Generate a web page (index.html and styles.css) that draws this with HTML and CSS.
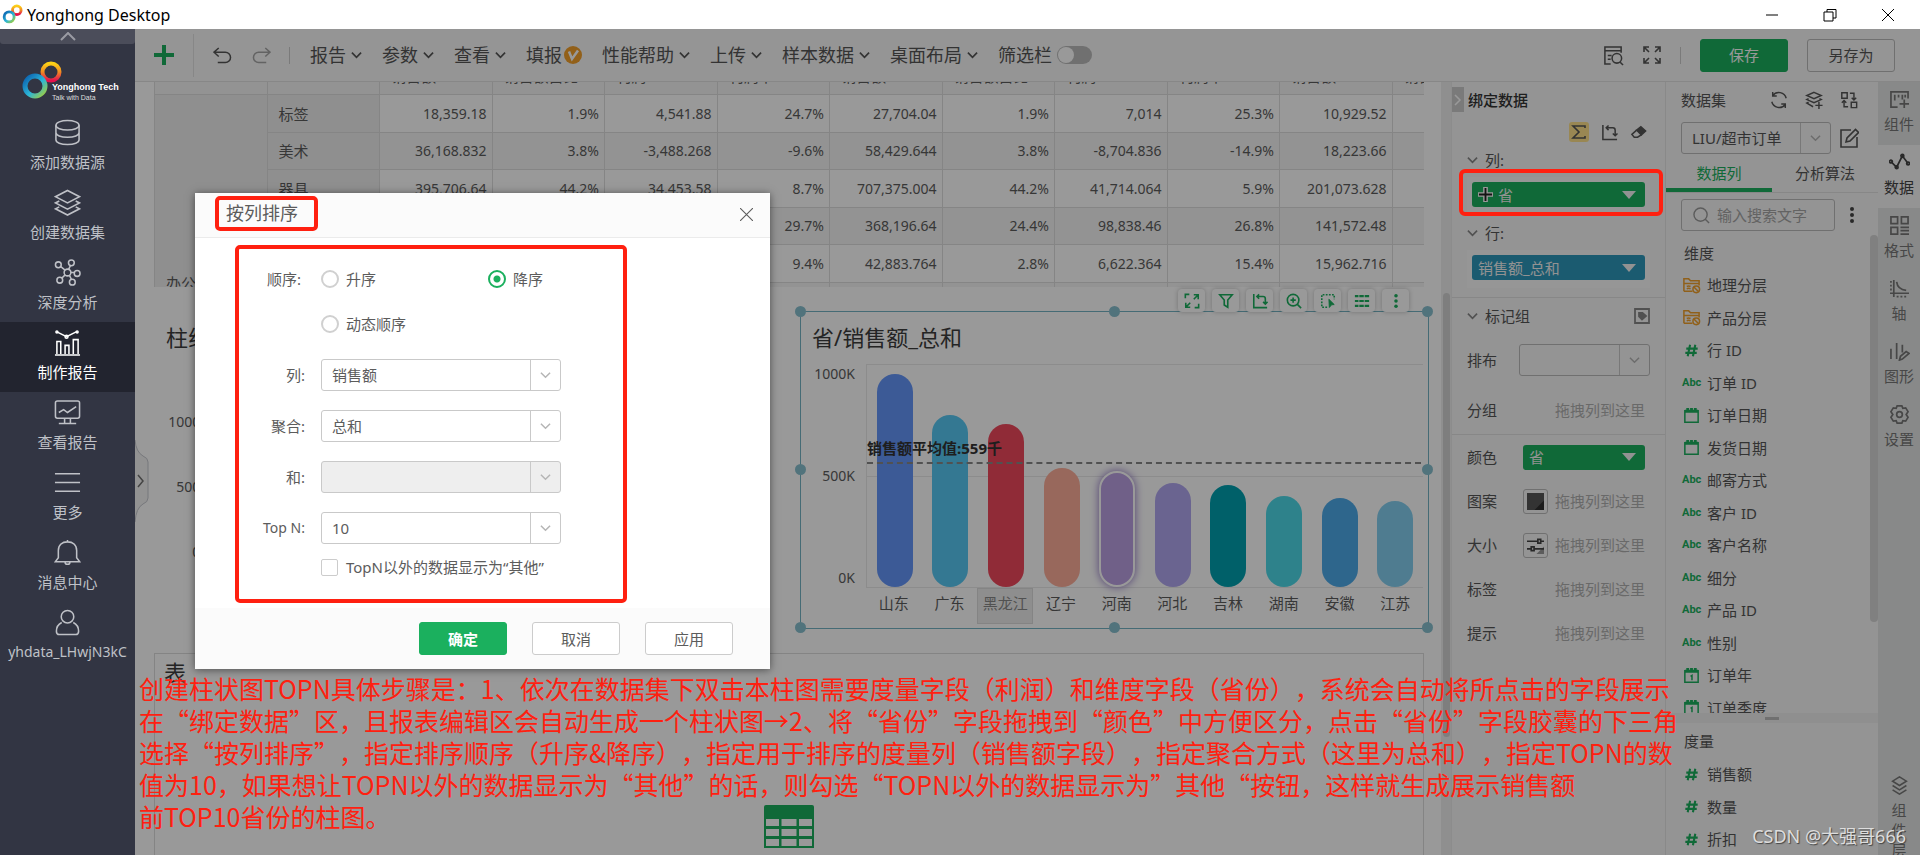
FILE: index.html
```html
<!DOCTYPE html>
<html lang="zh-CN">
<head>
<meta charset="utf-8">
<title>Yonghong Desktop</title>
<link rel="stylesheet" href="styles.css">
</head>
<body>
<svg class="defs" aria-hidden="true">
  <defs>
    <linearGradient id="warm" x1="0" y1="0" x2="0" y2="1"><stop offset="0" stop-color="#fcd116"/><stop offset=".5" stop-color="#f08a24"/><stop offset="1" stop-color="#e4104e"/></linearGradient>
    <linearGradient id="cool" x1="0" y1="0" x2="1" y2="1"><stop offset="0" stop-color="#0a5fae"/><stop offset=".55" stop-color="#2bb5d8"/><stop offset="1" stop-color="#a4cf3a"/></linearGradient>
  </defs>
  <symbol id="i-chev" viewBox="0 0 12 8"><path d="M1 1.500l5 5 5-5"/></symbol>
  <symbol id="i-down" viewBox="0 0 14 8"><path d="M0 0h14L7 8z"/></symbol>
  <symbol id="i-swap" viewBox="0 0 18 18"><path d="M2 1v15.500h15M5.500 4h7q2.500 0 2.500 2.500v6M8 1.500L5.500 4 8 6.500M12.500 10l2.500 2.500 2.500-2.500"/></symbol>
  <symbol id="i-hash" viewBox="0 0 20 20"><path d="M8.500 4L6 16M14 4l-2.500 12M4.500 8h12M3.500 12.500h12"/></symbol>
  <symbol id="i-cal" viewBox="0 0 20 20"><path d="M3 5h14v12H3z"/><path d="M3 5.500h14M6 2v4M10 2v4M14 2v4" stroke-width="3"/></symbol>
  <symbol id="i-folder" viewBox="0 0 20 20"><path d="M2 16V3h5l2 2h9v5M2 8h16M2 16h9M5 11q2-1 4 0M5 13.500q2-1 4 0"/><circle cx="15" cy="14" r="3.500"/><path d="M12.500 11.500l5 5"/></symbol>
  <symbol id="i-stack" viewBox="0 0 28 28"><path d="M14 1.500l12.500 6.500L14 14.500 1.500 8zM5.500 12.500l-4 2L14 21l12.500-6.500-4-2M5.500 18.500l-4 2L14 27l12.500-6.500-4-2"/></symbol>
  <symbol id="i-full" viewBox="0 0 18 18"><path d="M1 6V1h5M12 1h5v5M17 12v5h-5M6 17H1v-5M1.500 1.500l4.500 4.500M16.500 1.500L12 6M16.500 16.500L12 12M1.500 16.500L6 12"/></symbol>
  <symbol id="i-corners" viewBox="0 0 18 18"><path d="M1.500 6V1.500H6M1.500 9v0M11 2h5v5M16 2l-5 5M7 16H2v-5M2 16l5-5M16.500 12v4.500H12"/></symbol>
</svg>

<header class="titlebar">
  <svg class="app-logo" viewBox="0 0 22 22"><circle cx="15.500" cy="6.500" r="4.500" stroke="url(#warm)"/><circle cx="7.500" cy="13.500" r="5.200" stroke="url(#cool)"/></svg>
  <span class="app-name">Yonghong Desktop</span>
  <div class="window-buttons">
    <button aria-label="最小化"><svg viewBox="0 0 14 14"><path d="M1 7h12"/></svg></button>
    <button aria-label="还原"><svg viewBox="0 0 14 14"><path d="M1 4h9v9H1zM4 4V1.500h9V10h-3"/></svg></button>
    <button aria-label="关闭"><svg viewBox="0 0 14 14"><path d="M1 1l12 12M13 1L1 13"/></svg></button>
  </div>
</header>

<div class="app">
  <nav class="sidebar">
    <button class="side-fold" aria-label="收起"><svg viewBox="0 0 16 9"><path d="M1 8l7-7 7 7"/></svg></button>
    <div class="brand">
      <svg viewBox="0 0 42 40"><circle cx="29" cy="12" r="8.500" stroke="url(#warm)" stroke-width="4"/><circle cx="13" cy="26" r="10" stroke="url(#cool)" stroke-width="5"/></svg>
      <div class="brand-text"><strong>Yonghong Tech</strong><span>Talk with Data</span></div>
    </div>
    <a class="side-item" href="#"><svg viewBox="0 0 28 28"><ellipse cx="14" cy="6.500" rx="12" ry="5"/><path d="M2 6.500v15c0 3 5 5 12 5s12-2 12-5v-15M2 14c0 3 5 5 12 5s12-2 12-5"/></svg>添加数据源</a>
    <a class="side-item" href="#"><svg><use href="#i-stack"/></svg>创建数据集</a>
    <a class="side-item" href="#"><svg viewBox="0 0 28 28"><circle cx="14" cy="14" r="3.500"/><circle cx="4.500" cy="6" r="3"/><circle cx="18" cy="4" r="3"/><circle cx="24" cy="15" r="3"/><circle cx="19" cy="24" r="3"/><circle cx="6" cy="22" r="3"/><path d="M7 8l4.500 3.500M17 7l-2 4M17.500 14H21M16 17l2 4M11.500 16.500L8 20"/></svg>深度分析</a>
    <a class="side-item active" href="#"><svg viewBox="0 0 28 28"><path d="M1 27h26M3 26V13h4v13M11.500 26V17h4v9M20 26V11h5v15M3 3l10 5 10-5"/><circle cx="3" cy="3" r="1"/><circle cx="13" cy="8" r="1.500"/><circle cx="24" cy="3" r="1"/></svg>制作报告</a>
    <a class="side-item" href="#"><svg viewBox="0 0 28 28"><rect x="1.500" y="2" width="25" height="18" rx="2"/><path d="M5 14l5-3 4 3 9-6M11 20v5M17 20v5M5 25.500h18"/></svg>查看报告</a>
    <a class="side-item" href="#"><svg viewBox="0 0 28 28"><path d="M1 5h26M1 14h26M1 23h26"/></svg>更多</a>
    <a class="side-item" href="#"><svg viewBox="0 0 28 28"><path d="M1.500 23.500h25l-3-4V12c0-6-4-9-9.500-9s-9.500 3-9.500 9v7.500zM11.500 24c0 3 5 3 5 0M14 3V1"/></svg>消息中心</a>
    <a class="side-item user" href="#"><svg viewBox="0 0 28 28"><circle cx="14" cy="8" r="6.500"/><path d="M8 14c-4 2-5.500 5-5.500 9 0 2 1 3.500 3 3.500h17c2 0 3-1.500 3-3.500 0-4-1.500-7-5.500-9"/></svg>yhdata_LHwjN3kC</a>
  </nav>

  <div class="workspace">
    <div class="toolbar">
      <button class="add" aria-label="新建"><svg viewBox="0 0 20 20"><path d="M10 0v20M0 10h20"/></svg></button>
      <div class="history">
        <button aria-label="撤销"><svg viewBox="0 0 20 18"><path d="M6 1L1 5.500 6 10M1 5.500h12a5 5 0 010 11H5"/></svg></button>
        <button class="off" aria-label="重做"><svg viewBox="0 0 20 18"><path d="M14 1l5 4.500L14 10M19 5.500H7a5 5 0 000 11h8"/></svg></button>
      </div>
      <div class="menus">
        <button>报告<svg><use href="#i-chev"/></svg></button>
        <button>参数<svg><use href="#i-chev"/></svg></button>
        <button>查看<svg><use href="#i-chev"/></svg></button>
        <button class="vip">填报<svg viewBox="0 0 18 18"><circle cx="9" cy="9" r="9"/><path d="M5 5.500l3 7.500 6-8.500"/></svg></button>
        <button>性能帮助<svg><use href="#i-chev"/></svg></button>
        <button>上传<svg><use href="#i-chev"/></svg></button>
        <button>样本数据<svg><use href="#i-chev"/></svg></button>
        <button>桌面布局<svg><use href="#i-chev"/></svg></button>
        <label class="switch">筛选栏<input type="checkbox"></label>
      </div>
      <div class="tools">
        <button class="icon-btn" aria-label="预览"><svg viewBox="0 0 22 22"><path d="M8 20H2V2h17v6M2 6h17M5 11h4M5 15h3"/><circle cx="14.500" cy="14" r="5"/><path d="M18 18l3 3"/></svg></button>
        <button class="icon-btn" aria-label="全屏"><svg><use href="#i-full"/></svg></button>
        <span class="rule"></span>
        <button class="btn primary">保存</button>
        <button class="btn">另存为</button>
      </div>
    </div>

    <div class="stage">
      <main class="canvas">
        <div class="table-view">
          <table class="data">
            <thead><tr><th></th><th></th><th>销售额</th><th>销售额占比</th><th>利润</th><th>利润率</th><th>销售额</th><th>销售额占比</th><th>利润</th><th>利润率</th><th>销售额</th><th>销售额占比</th></tr></thead>
            <tbody>
            <tr><th class="group" rowspan="6">办公用品</th><th>标签</th><td>18,359.18</td><td>1.9%</td><td>4,541.88</td><td>24.7%</td><td>27,704.04</td><td>1.9%</td><td>7,014</td><td>25.3%</td><td>10,929.52</td><td></td></tr>
            <tr><th>美术</th><td>36,168.832</td><td>3.8%</td><td>-3,488.268</td><td>-9.6%</td><td>58,429.644</td><td>3.8%</td><td>-8,704.836</td><td>-14.9%</td><td>18,223.66</td><td></td></tr>
            <tr><th>器具</th><td>395,706.64</td><td>44.2%</td><td>34,453.58</td><td>8.7%</td><td>707,375.004</td><td>44.2%</td><td>41,714.064</td><td>5.9%</td><td>201,073.628</td><td></td></tr>
            <tr><th></th><td></td><td></td><td></td><td>29.7%</td><td>368,196.64</td><td>24.4%</td><td>98,838.46</td><td>26.8%</td><td>141,572.48</td><td></td></tr>
            <tr><th></th><td></td><td></td><td></td><td>9.4%</td><td>42,883.764</td><td>2.8%</td><td>6,622.364</td><td>15.4%</td><td>15,962.716</td><td></td></tr>
            <tr><th></th><td></td><td></td><td></td><td></td><td></td><td></td><td></td><td></td><td></td><td></td></tr>
            </tbody>
          </table>
        </div>

        <div class="charts">
          <section class="chart">
            <h2>柱线图</h2>
            <div class="plot-row"><div class="y-axis low"><span>1000K</span><span>500K</span><span>0K</span></div></div>
          </section>
          <section class="chart selected">
            <h2>省/销售额_总和</h2>
            <div class="plot-row">
              <div class="y-axis"><span>1000K</span><span>500K</span><span>0K</span></div>
              <div class="plot">
                <div class="bars">
                  <i class="b1" style="height:213px"></i><i class="b2" style="height:172px"></i><i class="b3" style="height:163px"></i><i class="b4" style="height:119px"></i><i class="b5" style="height:116px"></i><i class="b6" style="height:104px"></i><i class="b7" style="height:102px"></i><i class="b8" style="height:91px"></i><i class="b9" style="height:89px"></i><i class="b10" style="height:86px"></i>
                </div>
                <div class="average">销售额平均值:559千</div>
                <div class="x-axis"><span>山东</span><span>广东</span><span class="hot">黑龙江</span><span>辽宁</span><span>河南</span><span>河北</span><span>吉林</span><span>湖南</span><span>安徽</span><span>江苏</span></div>
              </div>
            </div>
            <div class="chart-tools">
              <button aria-label="放大"><svg><use href="#i-corners"/></svg></button>
              <button aria-label="过滤"><svg viewBox="0 0 18 18"><path d="M2 2h14l-5 6v8l-4-2.500V8z"/></svg></button>
              <button aria-label="转置"><svg><use href="#i-swap"/></svg></button>
              <button aria-label="缩放"><svg viewBox="0 0 18 18"><circle cx="8" cy="8" r="6.500"/><path d="M12.500 12.500L17 17M8 5v6M5 8h6"/></svg></button>
              <button aria-label="框选"><svg viewBox="0 0 18 18"><path d="M8 16H2V2h14v5" stroke-dasharray="2 1.500"/><path class="solid" d="M10 7l6 6-3 .3-2.500 3z" stroke-width="1"/></svg></button>
              <button aria-label="列表"><svg viewBox="0 0 18 18"><path d="M1 3.500h16M1 9h16M1 14.500h16" stroke-width="2.500" stroke-dasharray="4 1 5 1 5 1"/></svg></button>
              <button aria-label="更多"><svg class="dots" viewBox="0 0 18 18"><circle cx="9" cy="3" r="2"/><circle cx="9" cy="9" r="2"/><circle cx="9" cy="15" r="2"/></svg></button>
            </div>
            <i class="knob k1"></i><i class="knob k2"></i><i class="knob k3"></i><i class="knob k4"></i><i class="knob k5"></i><i class="knob k6"></i><i class="knob k7"></i><i class="knob k8"></i>
          </section>
        </div>

        <section class="grid-widget">
          <h2>表</h2>
          <svg viewBox="0 0 50 43"><path class="fill" d="M2 0h46q2 0 2 2v41H0V2q0-2 2-2z"/><path class="cells" d="M2 14h13v7H2zM17.500 14h15v7h-15zM35 14h13v7H35zM2 24h13v7H2zM17.500 24h15v7h-15zM35 24h13v7H35zM2 34h13v7H2zM17.500 34h15v7h-15zM35 34h13v7H35z"/></svg>
        </section>
      </main>
      <div class="gutter"><i></i></div>

      <aside class="bind">
        <button class="bind-fold" aria-label="收起"><svg viewBox="0 0 8 12"><path d="M1 1l5 5-5 5"/></svg></button>
        <h3>绑定数据</h3>
        <div class="bind-tools">
          <button class="sigma" aria-label="汇总"><svg viewBox="0 0 20 20"><path d="M16 6V4H4l6 6-6 6h12v-2"/></svg></button>
          <button aria-label="转置"><svg><use href="#i-swap"/></svg></button>
          <button aria-label="清除"><svg viewBox="0 0 18 18"><path class="ink" d="M7 6.500L11.500 3l5 4.500-4.500 4z"/><path d="M7 6.500L2 11l2.500 3H8l4-2.500"/></svg></button>
        </div>
        <div class="fold"><svg><use href="#i-chev"/></svg>列:</div>
        <div class="drop"><button class="pill"><svg class="cross" viewBox="0 0 16 16"><path class="halo" d="M8 0v16M0 8h16"/><path d="M8 1v14M1 8h14"/></svg><span>省</span><svg class="tri"><use href="#i-down"/></svg></button></div>
        <div class="fold"><svg><use href="#i-chev"/></svg>行:</div>
        <div class="drop"><button class="pill blue"><span>销售额_总和</span><svg class="tri"><use href="#i-down"/></svg></button></div>
        <div class="mark">
          <div class="fold"><svg><use href="#i-chev"/></svg>标记组<svg class="tag" viewBox="0 0 16 16"><path d="M1 1h14v14H1z"/><path class="ink" d="M5 5h3.500l3.500 3-4 3.500L5 8.500z"/></svg></div>
          <div class="brow tall"><label for="arrange">排布</label><span class="select"><select id="arrange"><option></option></select><svg><use href="#i-chev"/></svg></span></div>
          <div class="brow group-row"><span>分组</span><em>拖拽列到这里</em></div>
        </div>
        <div class="brow"><span>颜色</span><button class="pill"><span>省</span><svg class="tri"><use href="#i-down"/></svg></button></div>
        <div class="brow"><span>图案</span><button class="swatch" aria-label="图案"><svg viewBox="0 0 18 18"><path class="tone" d="M0 0h18v18H0z"/><path class="tone-dark" d="M18 8v10H8z"/></svg></button><em>拖拽列到这里</em></div>
        <div class="brow"><span>大小</span><button class="swatch" aria-label="大小"><svg viewBox="0 0 18 18"><path class="corner" d="M18 10v8h-8z"/><path class="slide" d="M0 4.500h11M15 4.500h3M0 12.500h4M8 12.500h10M11.500 2.500h3v4h-3zM4.500 10.500h3v4h-3z"/></svg></button><em>拖拽列到这里</em></div>
        <div class="brow"><span>标签</span><em>拖拽列到这里</em></div>
        <div class="brow"><span>提示</span><em>拖拽列到这里</em></div>
      </aside>

      <aside class="dataset">
        <div class="ds-head"><h3>数据集</h3>
          <button class="icon-btn" aria-label="刷新"><svg viewBox="0 0 20 20"><path d="M18 8A8.500 8.500 0 003 5M2 12a8.500 8.500 0 0015 3M3 1v4.500h4.500M17 19v-4.500h-4.500"/></svg></button>
          <button class="icon-btn" aria-label="添加数据集"><svg viewBox="0 0 20 20"><path d="M10 1.500l8 3.500-8 3.500L2 5zM4 8.500L2 9.500l8 3.500 8-3.500-2-1M4 12.500l-2 1 7 4M15.500 12v8M11.500 16h8"/></svg></button>
          <button class="icon-btn" aria-label="切换"><svg viewBox="0 0 20 20"><path d="M2 2h6v6H2zM12.500 12.500h6v6h-6zM11 2.500h4.500v7M13 7.500l2.500 2.500L18 7.500M9 17.500H4.500v-6M2 13l2.500-2.500L7 13"/></svg></button>
        </div>
        <div class="ds-pick"><span class="select"><select aria-label="数据集"><option>LIU/超市订单</option></select><svg><use href="#i-chev"/></svg></span>
          <button class="icon-btn" aria-label="编辑"><svg viewBox="0 0 20 20"><path d="M12 2H2v17h16V9M7 14l1-4 8.500-8.500 3 3L11 13z"/></svg></button></div>
        <div class="tabs"><button class="on">数据列</button><button>分析算法</button></div>
        <div class="search"><label><svg viewBox="0 0 18 18"><circle cx="8" cy="8" r="7"/><path d="M13 13l4 4"/></svg><input type="text" placeholder="输入搜索文字" aria-label="输入搜索文字"></label>
          <button aria-label="更多"><svg viewBox="0 0 4 18"><circle cx="2" cy="3" r="2"/><circle cx="2" cy="9" r="2"/><circle cx="2" cy="15" r="2"/></svg></button></div>
        <div class="dims">
          <h4>维度</h4>
          <ul>
            <li><svg class="or"><use href="#i-folder"/></svg>地理分层</li>
            <li><svg class="or"><use href="#i-folder"/></svg>产品分层</li>
            <li><svg class="bold"><use href="#i-hash"/></svg>行 ID</li>
            <li><b>Abc</b>订单 ID</li>
            <li><svg><use href="#i-cal"/></svg>订单日期</li>
            <li><svg><use href="#i-cal"/></svg>发货日期</li>
            <li><b>Abc</b>邮寄方式</li>
            <li><b>Abc</b>客户 ID</li>
            <li><b>Abc</b>客户名称</li>
            <li><b>Abc</b>细分</li>
            <li><b>Abc</b>产品 ID</li>
            <li><b>Abc</b>性别</li>
            <li><svg viewBox="0 0 20 20"><use href="#i-cal"/><path d="M9 11l1.500-1v5"/></svg>订单年</li>
            <li><svg viewBox="0 0 20 20"><use href="#i-cal"/><path d="M9 11l1.500-1v5"/></svg>订单季度</li>
          </ul>
          <i class="thumb"></i>
        </div>
        <div class="splitter"><i></i></div>
        <div class="measures">
          <h4>度量</h4>
          <ul>
            <li><svg class="bold"><use href="#i-hash"/></svg>销售额</li>
            <li><svg class="bold"><use href="#i-hash"/></svg>数量</li>
            <li><svg class="bold"><use href="#i-hash"/></svg>折扣</li>
          </ul>
        </div>
      </aside>

      <nav class="rail">
        <a href="#"><svg viewBox="0 0 22 20"><path d="M9 18H2V2h18v7M6 5v6M10 5v3M14 5v5M17 5v3M16 10v9M11 14.500h10"/></svg>组件</a>
        <a href="#" class="on"><svg viewBox="0 0 22 20"><path d="M2 9l6 6 6-12 6 8"/><circle cx="2" cy="9" r="1.500"/><circle cx="8" cy="15" r="1.500"/><circle cx="14" cy="3" r="1.500"/><circle cx="20" cy="11" r="1.500"/></svg>数据</a>
        <a href="#"><svg viewBox="0 0 22 20"><path d="M2 1h7v7H2zM13 1h7v7h-7zM2 12h7v7H2zM12 12h9M12 15.500h9M12 19h9"/></svg>格式</a>
        <a href="#"><svg viewBox="0 0 22 20"><path d="M5 1v18M1 15h20M8 3q1 8 10 9"/><path d="M2 2v12M8 18.500h12" stroke-dasharray="2 2"/></svg>轴</a>
        <a href="#"><svg viewBox="0 0 22 20"><path d="M2 7v11M8 1v17M14 3v8M11 19l1-4 6-5 3 2-7 6z"/></svg>图形</a>
        <a href="#"><svg viewBox="0 0 22 20"><path d="M8.500 1h5l1 2.500 3-.5 2.500 4-2 3 2 3-2.500 4-3-.5-1 2.500h-5l-1-2.500-3 .5L2 13l2-3-2-3 2.500-4 3 .5z"/><circle cx="11" cy="10" r="3"/></svg>设置</a>
        <a href="#" class="layers"><svg viewBox="0 0 22 22"><path d="M11 1l8 5-8 5-8-5zM3 11l8 5 8-5M3 16l8 5 8-5"/></svg>组件层次</a>
      </nav>
    </div>
    <div class="mask"></div>
    <button class="side-handle" aria-label="展开"><svg viewBox="0 0 14 82"><path class="edge" d="M0 0q1 12 8 16 5 2 5 6v36q0 4-5 6-7 4-8 18"/><path d="M3 35l5 6-5 6"/></svg></button>
  </div>
</div>

<form class="dialog" role="dialog" aria-labelledby="dlg-title">
  <div class="dlg-head"><h1 id="dlg-title">按列排序</h1><button type="button" aria-label="关闭"><svg viewBox="0 0 12 12"><path d="M0 0l12 12M12 0L0 12"/></svg></button></div>
  <div class="dlg-body">
    <div class="options">
      <div class="line radios"><span class="name">顺序:</span><label><input type="radio" name="order">升序</label><label><input type="radio" name="order" checked>降序</label><label><input type="radio" name="order">动态顺序</label></div>
      <div class="line"><label class="name" for="f-col">列:</label><span class="select"><select id="f-col"><option>销售额</option></select><svg><use href="#i-chev"/></svg></span></div>
      <div class="line"><label class="name" for="f-agg">聚合:</label><span class="select"><select id="f-agg"><option>总和</option></select><svg><use href="#i-chev"/></svg></span></div>
      <div class="line"><label class="name" for="f-and">和:</label><span class="select disabled"><select id="f-and" disabled><option></option></select><svg><use href="#i-chev"/></svg></span></div>
      <div class="line"><label class="name latin" for="f-top">Top N:</label><span class="select"><select id="f-top"><option>10</option></select><svg><use href="#i-chev"/></svg></span></div>
      <label class="other"><input type="checkbox">TopN以外的数据显示为“其他”</label>
    </div>
  </div>
  <div class="dlg-foot"><button type="button" class="btn primary">确定</button><button type="button" class="btn">取消</button><button type="button" class="btn">应用</button></div>
</form>

<i class="pill-box"></i>
<p class="note">创建柱状图TOPN具体步骤是：1、依次在数据集下双击本柱图需要度量字段（利润）和维度字段（省份），系统会自动将所点击的字段展示<br>在“绑定数据”区，且报表编辑区会自动生成一个柱状图→2、将“省份”字段拖拽到“颜色”中方便区分，点击“省份”字段胶囊的下三角<br>选择“按列排序”，指定排序顺序（升序&amp;降序），指定用于排序的度量列（销售额字段），指定聚合方式（这里为总和），指定TOPN的数<br>值为10，如果想让TOPN以外的数据显示为“其他”的话，则勾选“TOPN以外的数据显示为”其他“按钮，这样就生成展示销售额<br>前TOP10省份的柱图。</p>
<span class="credit">CSDN @大强哥666</span>
</body>
</html>
```
FILE: styles.css
```css
* { box-sizing: border-box; }
body {
  margin: 0;
  height: 100vh;
  display: flex;
  flex-direction: column;
  overflow: hidden;
  position: relative;
  font: 15px/20px "Noto Sans", "Noto Sans CJK SC", sans-serif;
  color: #5c5c5c;
}
h1, h2, h3, h4, p, ul { margin: 0; padding: 0; font-weight: 400; }
ul { list-style: none; }
a { color: inherit; text-decoration: none; }
button { font: inherit; color: inherit; background: none; border: 0; padding: 0; }
svg { fill: none; stroke: currentColor; display: block; flex: none; }
.defs { position: absolute; width: 0; height: 0; }

/* window frame */
.titlebar { height: 29px; flex: none; display: flex; align-items: center; gap: 4px; padding-left: 2px; background: #fff; color: #000; }
.app-logo { width: 21px; height: 21px; stroke-width: 3; }
.app-name { font-size: 16px; }
.window-buttons { margin-left: auto; display: flex; }
.window-buttons button { width: 58px; display: flex; justify-content: center; }
.window-buttons button:last-child { margin-right: 3px; }
.window-buttons svg { width: 14px; height: 14px; }

.app { flex: 1; min-height: 0; display: flex; }

/* sidebar */
.sidebar { width: 135px; flex: none; background: #323543; color: #bfc1c7; }
.side-fold { width: 100%; height: 15px; display: flex; align-items: center; justify-content: center; background: #4b4d5a; color: #9a9ba3; border-radius: 0 0 3px 3px; }
.side-fold svg { width: 16px; height: 9px; stroke-width: 2; }
.brand { height: 68px; padding: 16px 0 0 22px; display: flex; }
.brand svg { width: 42px; height: 40px; margin-right: -12px; }
.brand-text { display: flex; flex-direction: column; justify-content: flex-end; font: 7px/9px "Liberation Sans", sans-serif; color: #ddd; white-space: nowrap; height: 42px; }
.brand-text strong { font-size: 9px; line-height: 11px; color: #fff; }
.side-item { height: 70px; padding-top: 7px; display: flex; flex-direction: column; align-items: center; gap: 6px; }
.side-item svg { width: 27px; height: 27px; stroke-width: 1.6; }
.side-item.active { background: #22242f; color: #fff; }
.side-item.user { font-size: 14px; }

/* workspace */
.workspace { flex: 1; min-width: 0; display: flex; flex-direction: column; position: relative; background: #fff; }
.mask { position: absolute; inset: 0; background: rgba(0, 0, 0, .4); }
.side-handle { position: absolute; left: 0; top: 411px; color: #444; }
.side-handle svg { width: 14px; height: 82px; stroke-width: 1.5; }
.side-handle .edge { stroke: #77787c; stroke-width: 1; fill: #929292; }

.toolbar { height: 53px; flex: none; display: flex; align-items: center; background: #f8f8f8; border-bottom: 1px solid #e2e2e2; color: #555; font-size: 18px; }
.add { width: 59px; height: 43px; border-right: 1px solid #e2e2e2; display: flex; align-items: center; padding-left: 19px; color: #1bb05e; }
.add svg { width: 20px; height: 20px; stroke-width: 4; }
.history { display: flex; gap: 20px; padding: 0 18px 0 19px; border-right: 1px solid #ccc; }
.history svg { width: 19px; height: 17px; stroke-width: 1.6; }
.off { color: #a5a5a5; }
.menus { display: flex; gap: 20px; padding-left: 20px; white-space: nowrap; }
.menus button, .switch { display: flex; align-items: center; gap: 5px; }
.menus svg { width: 11px; height: 8px; stroke-width: 1.8; }
.menus .vip { gap: 2px; }
.menus .vip svg { width: 18px; height: 18px; fill: #f3a02b; stroke: none; }
.vip path { fill: none; stroke: #fff; stroke-width: 2.5; }
.switch input { appearance: none; margin: 0; width: 35px; height: 18px; border-radius: 9px; background: #bbb; padding: 1px; }
.switch input::before { content: ""; display: block; width: 16px; height: 16px; border-radius: 50%; background: #fff; }
.tools { margin-left: auto; padding-right: 25px; display: flex; align-items: center; gap: 19px; }
.tools .icon-btn:first-child svg { width: 21px; height: 21px; }
.rule { width: 1px; height: 17px; background: #ccc; }
.icon-btn svg { width: 18px; height: 18px; stroke-width: 1.6; }
.btn { width: 88px; height: 33px; border: 1px solid #ccc; border-radius: 3px; background: #fff; font-size: 15px; }
.btn.primary { background: #1bb05e; border-color: #1bb05e; color: #fff; }
.tools .btn { background: none; border-color: #bbb; }
.tools .btn.primary { background: #1bb05e; border-color: #1bb05e; }

.stage { flex: 1; min-height: 0; display: flex; }
.canvas { flex: 1; min-width: 0; display: flex; flex-direction: column; padding: 0 17px 0 19px; overflow: hidden; }

/* pivot table */
.table-view { height: 205px; flex: none; overflow: hidden; }
.data { margin-top: -25px; width: calc(100% + 81px); border-collapse: collapse; table-layout: fixed; font-size: 14px; color: #5c5c5c; }
.data th, .data td { border: 1px solid #dedede; padding: 0 5px; text-align: right; font-weight: 400; height: 38px; }
.data tr:nth-child(even) > * { height: 37px; }
.data tr:nth-child(even) td { background: #f5f5f5; }
.data th { background: #eee; text-align: left; padding: 0 11px; font-size: 15px; }
.data thead th { background: #f5f5f5; height: 37px; }
.data .group { vertical-align: bottom; padding-bottom: 26px; }

/* charts */
.charts { display: grid; grid-template-columns: 1fr 1fr; gap: 24px; padding: 24px 0; }
.chart { position: relative; padding: 10px 5px 4px 11px; border: 1px solid transparent; }
.chart.selected { margin: 0 -5px 0 -1px; border-color: #74b3c4; }
h2 { font-size: 22px; line-height: 30px; color: #3c3c3c; }
.plot-row { display: flex; gap: 11px; padding-top: 12px; }
.y-axis { width: 43px; height: 224px; display: flex; flex-direction: column; justify-content: space-between; align-items: flex-end; font-size: 14px; }
.y-axis.low { height: 150px; margin-top: 48px; }
.plot { flex: 1; position: relative; }
.bars { height: 224px; display: grid; grid-template-columns: repeat(10, 1fr); align-items: end; justify-items: center; border: 1px solid #e9e9e9; border-right: 0; background: linear-gradient(#e9e9e9, #e9e9e9) 0 50% / 100% 1px no-repeat; }
.bars i { width: 36px; border-radius: 18px; }
.b1 { background: #6496fa; } .b2 { background: #57c8f3; } .b3 { background: #f0495d; } .b4 { background: #fdad99; }
.b5 { background: #bba0e3; border: 2px solid #fff; box-shadow: 0 0 8px #8a6fc0; }
.b6 { background: #b1a7f0; } .b7 { background: #00a0b0; } .b8 { background: #4ed9e8; } .b9 { background: #4daae9; } .b10 { background: #84cff0; }
.average { position: absolute; left: 1px; right: 2px; top: 74px; height: 26px; border-bottom: 2px dashed #888; font-size: 15px; font-weight: 700; color: #333; }
.x-axis { display: grid; grid-template-columns: repeat(10, 1fr); text-align: center; }
.x-axis span { padding: 5px 0 11px; white-space: nowrap; }
.x-axis .hot { background: #ededed; border: 1px solid #ddd; color: #888; padding: 4px 0 10px; }
.chart-tools { position: absolute; right: 19px; bottom: 100%; display: flex; gap: 7px; color: #1bb05e; }
.chart-tools button { width: 27px; height: 23px; background: #fff; border-radius: 4px; box-shadow: 0 0 5px rgba(0, 0, 0, .25); display: flex; align-items: center; justify-content: center; }
.chart-tools svg { width: 16px; height: 16px; stroke-width: 1.8; }
.solid, .ink { fill: currentColor; }
.chart-tools .dots { fill: currentColor; stroke: none; }
.knob { position: absolute; width: 11px; height: 11px; margin: -6px; border-radius: 50%; background: #88c0cf; }
.k1 { left: 0; top: 0; } .k2 { left: 50%; top: 0; } .k3 { left: 100%; top: 0; } .k4 { left: 0; top: 50%; } .k5 { left: 100%; top: 50%; } .k6 { left: 0; top: 100%; } .k7 { left: 50%; top: 100%; } .k8 { left: 100%; top: 100%; }

.grid-widget { flex: 1; min-height: 220px; border: 1px solid #dcdcdc; padding: 3px 9px; display: flex; flex-direction: column; }
.grid-widget svg { width: 50px; height: 43px; align-self: center; margin-top: 118px; stroke: none; }
.fill { fill: #1bb05e; }
.cells { fill: #fff; }

.gutter { width: 10px; background: #efefef; padding: 211px 1px 0 2px; }
.gutter i { display: block; height: 444px; border-radius: 4px; background: #d2d2d2; }

/* binding panel */
.bind { width: 215px; background: #f7f7f7; border-left: 1px solid #e9e9e9; border-right: 1px solid #e5e5e5; position: relative; color: #555; }
.bind-fold { position: absolute; left: 0; top: 5px; width: 12px; height: 25px; background: #ccc; color: #fff; padding: 0 2px; }
.bind-fold svg { width: 8px; height: 12px; stroke-width: 1.5; }
.bind h3 { font-size: 15px; font-weight: 500; padding: 8px 16px 10px; line-height: 20px; color: #333; }
.bind-tools { display: flex; justify-content: flex-end; gap: 12px; padding: 2px 18px 0 0; height: 22px; align-items: center; }
.bind-tools svg { width: 17px; height: 17px; stroke-width: 1.6; }
.bind-tools .sigma { background: #ffe28a; border-radius: 3px; }
.sigma svg { width: 20px; height: 20px; }
.fold { display: flex; align-items: center; gap: 7px; padding: 8px 15px 7px; line-height: 20px; }
.fold svg { width: 11px; height: 8px; stroke-width: 1.8; color: #888; }
.fold .tag { width: 16px; height: 16px; margin-left: auto; }
.drop { margin: 0 15px; background: #fafafa; padding: 5px 5px 8px; }
.pill { width: 100%; height: 25px; display: flex; align-items: center; gap: 5px; padding: 0 9px 0 6px; border-radius: 3px; background: #1bb05e; color: #f4f4f4; text-align: left; }
.pill span { flex: 1; }
.pill .tri { width: 14px; height: 8px; fill: currentColor; stroke: none; }
.pill.blue { background: #2d98bb; }
.cross { width: 15px; height: 15px; stroke: #222; stroke-width: 2; }
.cross .halo { stroke: #fff; stroke-width: 5; }
.mark { border-top: 1px solid #e2e2e2; border-bottom: 1px solid #e2e2e2; margin-top: 9px; }
.mark .fold { padding-bottom: 9px; }
.brow { height: 44px; display: flex; align-items: center; justify-content: space-between; padding: 0 20px 0 15px; gap: 7px; }
.brow.tall { height: 50px; padding-right: 15px; }
.brow.group-row { height: 49px; }
.brow > span:first-child { flex: 1; }
.brow .pill { width: 122px; }
.brow em { font-style: normal; color: #b0b0b0; }
.brow .select { width: 131px; }
.swatch { width: 25px; height: 25px; border: 1px solid #bbb; border-radius: 3px; padding: 3px; }
.swatch svg { width: 17px; height: 17px; stroke: none; }
.tone { fill: #555; }
.tone-dark { fill: #2d2d2d; }
.corner { fill: #999; }
.slide { stroke: #444; stroke-width: 1.8; }

.select { display: grid; grid-template-columns: 1fr 30px; height: 32px; border: 1px solid #c9c9c9; border-radius: 3px; background: #fff; align-items: center; }
.select select { grid-area: 1 / 1 / 2 / 3; appearance: none; border: 0; background: none; font: inherit; color: inherit; padding: 0 10px; height: 30px; opacity: 1; }
.select svg { grid-area: 1 / 2; height: 30px; width: 30px; padding: 11px 9px; border-left: 1px solid #c9c9c9; color: #b5b5b5; stroke-width: 1.6; pointer-events: none; }
.select.disabled { background: #eee; }
.bind .select, .dataset .select { background: none; border-color: #bbb; }

/* data set panel */
.dataset { width: 212px; background: #f7f7f7; display: flex; flex-direction: column; color: #555; position: relative; }
.dataset h3 { font-size: 15px; line-height: 20px; flex: 1; }
.ds-head { display: flex; align-items: center; gap: 17px; padding: 8px 20px 10px 15px; }
.ds-pick { display: flex; align-items: center; gap: 8px; padding: 2px 19px 0 15px; }
.ds-pick .select { flex: 1; }
.ds-pick .icon-btn svg { width: 20px; height: 20px; }
.tabs { display: flex; height: 39px; border-bottom: 1px solid #e2e2e2; flex: none; }
.tabs button { width: 107px; height: 38px; }
.tabs .on { color: #1bb05e; border-bottom: 4px solid #1bb05e; padding-top: 4px; }
.search { display: flex; justify-content: space-between; padding: 6px 24px 0 15px; }
.search label { display: flex; align-items: center; gap: 7px; width: 154px; height: 32px; border: 1px solid #bbb; border-radius: 3px; padding-left: 11px; color: #999; }
.search label svg { width: 17px; height: 17px; stroke-width: 1.5; }
.search input { border: 0; background: none; padding: 0; font: inherit; width: 110px; outline: 0; }
.search input::placeholder { color: #a5a5a5; }
.search button svg { width: 4px; height: 18px; fill: #444; stroke: none; }
.dims { height: 482px; overflow: hidden; position: relative; padding-top: 12px; flex: none; }
h4 { font-size: 15px; line-height: 20px; padding-left: 18px; }
.dataset ul { padding-top: 6px; }
.dataset li { height: 32px; display: flex; align-items: center; gap: 6px; padding-left: 16px; white-space: nowrap; }
.dataset li:nth-child(even) { height: 33px; }
.dataset li svg { width: 19px; height: 19px; color: #1bb05e; stroke-width: 1.6; }
.dataset li .or { color: #f0a02c; }
.dataset li .bold { stroke-width: 2.2; }
.dataset li b { width: 19px; font: 700 11px/16px Roboto, sans-serif; color: #1bb05e; }
.thumb { position: absolute; right: 0; top: 4px; width: 8px; height: 387px; border-radius: 4px; background: #d6d6d6; }
.splitter { height: 10px; flex: none; background: #eee; display: flex; align-items: center; justify-content: center; }
.splitter i { width: 14px; height: 3px; background: #bbb; }
.measures { padding-top: 8px; overflow: hidden; }
.measures ul { padding-top: 7px; }

.rail { width: 42px; background: #e3e5e4; display: flex; flex-direction: column; color: #777; }
.rail a { height: 63px; padding-top: 8px; display: flex; flex-direction: column; align-items: center; gap: 5px; flex: none; }
.rail svg { width: 21px; height: 19px; stroke-width: 1.8; }
.rail .on { background: #f7f7f7; color: #444; }
.rail .layers { margin-top: auto; height: 84px; padding: 5px 13px; line-height: 20px; text-align: center; overflow: hidden; word-break: break-all; }

/* sort dialog */
.dialog { position: absolute; left: 195px; top: 193px; width: 575px; background: #fff; box-shadow: 0 1px 8px rgba(0, 0, 0, .5); }
.dlg-head { height: 45px; background: #fbfbfb; border-bottom: 1px solid #ebebeb; display: flex; justify-content: space-between; align-items: flex-start; padding: 3px 17px 0 20px; }
.dlg-head h1 { font-size: 18px; line-height: 27px; border: 4px solid #ff2010; border-radius: 5px; width: 103px; height: 35px; padding-left: 7px; }
.dlg-head button { padding-top: 12px; }
.dlg-head svg { width: 13px; height: 13px; }
.dlg-body { padding: 7px 143px 5px 40px; }
.options { border: 4px solid #ff2010; border-radius: 5px; height: 358px; padding: 10px 0 0 24px; }
.line { display: grid; grid-template-columns: 42px 240px; column-gap: 16px; align-items: center; margin-bottom: 19px; }
.line .name { text-align: right; white-space: nowrap; }
.line .latin { font-size: 14px; padding-right: 4px; }
.radios { grid-template-columns: 58px 167px 1fr; row-gap: 5px; margin-bottom: 15px; column-gap: 0; }
.radios .name { padding-right: 20px; }
.radios label { height: 40px; display: flex; align-items: center; gap: 7px; }
.radios label:nth-of-type(3) { grid-column: 2; }
.radios input, .other input { appearance: none; margin: 0; width: 18px; height: 18px; border: 2px solid #d0d0d0; border-radius: 50%; background: #fff; }
.radios input:checked { border-color: #1bb05e; background: radial-gradient(#1bb05e 3px, #fff 4px); }
.other { display: flex; align-items: center; gap: 8px; padding-left: 58px; margin-top: -6px; white-space: nowrap; }
.other input { width: 17px; height: 17px; border: 1px solid #ccc; border-radius: 2px; }
.dlg-foot { height: 61px; display: flex; justify-content: flex-end; align-items: center; gap: 25px; padding-right: 37px; background: #fbfbfb; }
.dlg-foot .btn:first-child { font-weight: 700; }

/* annotations */
.pill-box { position: absolute; right: 257px; top: 169px; width: 204px; height: 47px; border: 4px solid #ff2010; border-radius: 6px; }
.note { position: absolute; left: 139px; top: 672px; font: 25px/32px "Noto Sans CJK SC", sans-serif; color: #ff2010; white-space: nowrap; text-spacing-trim: space-all; }
.credit { position: absolute; right: 14px; bottom: 7px; font-size: 18px; line-height: 24px; color: #ddd; text-shadow: 1px 1px 1px #444; }
```
